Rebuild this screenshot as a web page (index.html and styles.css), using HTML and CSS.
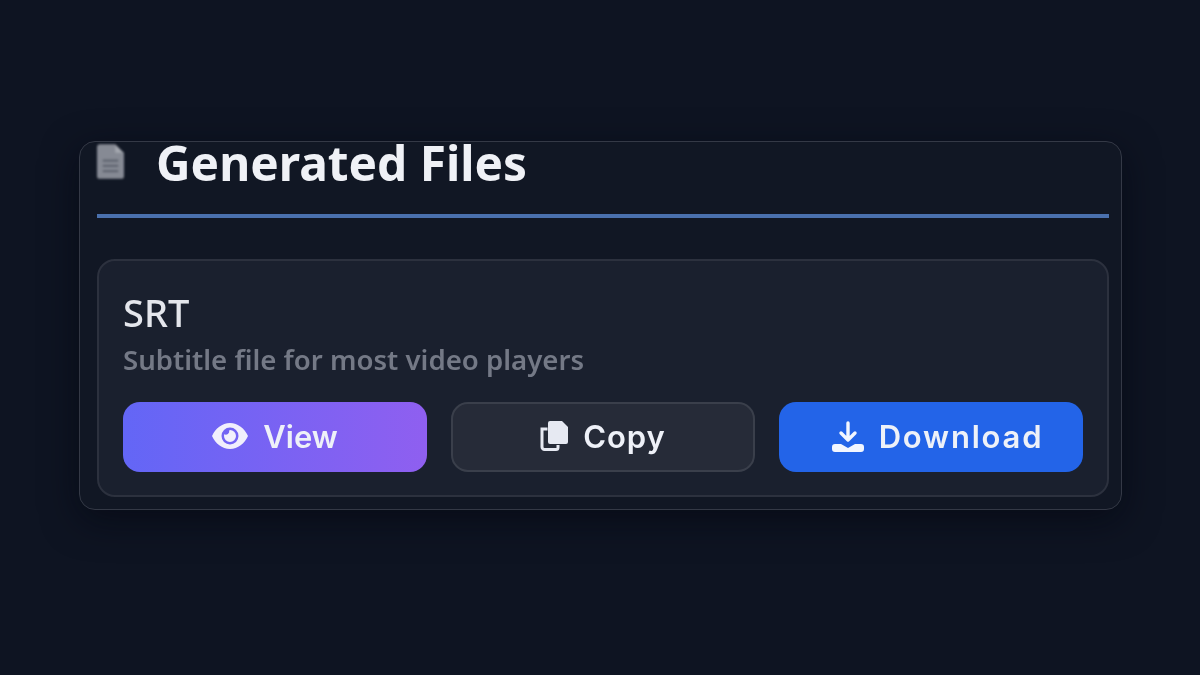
FILE: index.html
```html
<!DOCTYPE html>
<html lang="en">
<head>
<meta charset="utf-8">
<title>Generated Files</title>
<link rel="stylesheet" href="styles.css">
</head>
<body>
<section class="panel">
  <header class="panel-head">
    <svg class="doc-icon" viewBox="0 0 28 36" aria-hidden="true">
      <path fill="#868a94" d="M3 0h16l9 9v24a3 3 0 0 1-3 3H3a3 3 0 0 1-3-3V3a3 3 0 0 1 3-3z"/>
      <path fill="#a5a8b0" d="M19 1l8 8h-8z"/>
      <path stroke="#5f646f" stroke-width="2.400" d="M6 17h16M6 22.500h16M6 28h16"/>
    </svg>
    <h2 class="panel-title">Generated Files</h2>
  </header>
  <article class="file-card">
    <h3 class="file-name">SRT</h3>
    <p class="file-desc">Subtitle file for most video players</p>
    <div class="actions">
      <button class="btn btn-view">
        <svg class="icon icon-eye" viewBox="0 0 36 26" aria-hidden="true">
          <path fill="#f1effc" fill-rule="evenodd" d="M18 0C10 0 3.500 5.500 0 13c3.500 7.500 10 13 18 13s14.500-5.500 18-13C32.500 5.500 26 0 18 0zm0 4.500a8.500 8.500 0 1 1 0 17 8.500 8.500 0 0 1 0-17z"/>
          <path fill="#f1effc" fill-rule="evenodd" d="M18 7a6 6 0 1 1-6 6c0-.6.1-1.200.3-1.700a3.500 3.500 0 0 0 4.900-3.800c.3-.3.500-.5.800-.5z"/>
        </svg>
        <span>View</span>
      </button>
      <button class="btn btn-copy">
        <svg class="icon icon-copy" viewBox="0 0 28 30" aria-hidden="true">
          <path fill="none" stroke="#e6e9f2" stroke-width="3" d="M7.500 8H2v18a2.500 2.500 0 0 0 2.500 2.500H16a2 2 0 0 0 2-2V24"/>
          <path fill="#e6e9f2" d="M10 0h12l6 6v15a2 2 0 0 1-2 2H10a2 2 0 0 1-2-2V2a2 2 0 0 1 2-2z"/>
        </svg>
        <span>Copy</span>
      </button>
      <button class="btn btn-download">
        <svg class="icon icon-download" viewBox="0 0 32 31" aria-hidden="true">
          <path fill="none" stroke="#f2f6ff" stroke-width="3.400" stroke-linecap="round" stroke-linejoin="round" d="M16 2v16M9 12l7 7 7-7"/>
          <path fill="#f2f6ff" d="M3 23h6l7 4 7-4h6a3 3 0 0 1 3 3v2a3 3 0 0 1-3 3H3a3 3 0 0 1-3-3v-2a3 3 0 0 1 3-3z"/>
        </svg>
        <span>Download</span>
      </button>
    </div>
  </article>
</section>
</body>
</html>
```
FILE: styles.css
```css
* { box-sizing: border-box; }
html, body { margin: 0; height: 100%; }
body {
  background: #0e1422;
  padding: 141px 78px 0 79px;
  overflow: hidden;
  font-family: "Noto Sans", "Open Sans", sans-serif;
}
.panel {
  height: 369px;
  background: #111724;
  border: 1px solid #343946;
  border-radius: 16px;
  padding: 0 12px 12px 17px;
  box-shadow: 0 10px 36px rgba(3, 6, 14, 0.55);
}
.panel-head {
  height: 76px;
  display: flex;
  align-items: flex-start;
  gap: 32px;
  border-bottom: 4px solid #4a70ad;
}
.doc-icon {
  width: 27px;
  height: 35px;
  margin-top: 2px;
  flex: none;
  filter: blur(1px);
}
.panel-title {
  margin: 1px 0 0;
  font-size: 47.800px;
  line-height: 40px;
  font-weight: 700;
  color: #eff1f6;
  filter: blur(0.5px);
}
.file-card {
  margin-top: 41px;
  height: 238px;
  background: #1a202e;
  border: 2px solid #2c313e;
  border-radius: 18px;
  padding: 27px 24px 0;
}
.file-name {
  margin: 0;
  font-size: 38px;
  line-height: 48px;
  font-weight: 500;
  color: #e4e6ec;
  filter: blur(0.5px);
}
.file-desc {
  margin: 5px 0 0;
  font-size: 27.600px;
  line-height: 36px;
  font-weight: 600;
  color: #747986;
  filter: blur(0.5px);
}
.actions {
  margin-top: 25px;
  display: grid;
  grid-template-columns: repeat(3, 1fr);
  gap: 24px;
}
.btn {
  height: 70px;
  display: flex;
  align-items: center;
  justify-content: center;
  gap: 15px;
  border: 0;
  border-radius: 17px;
  padding: 0 0 2px;
  font-family: "Inter", "Noto Sans", sans-serif;
  font-size: 31px;
  font-weight: 600;
  color: #eef1f8;
}
.btn span, .btn .icon { filter: blur(0.5px); }
.btn-view { background: linear-gradient(90deg, #6366f6, #8f5ff0); }
.btn-copy { background: #262b38; border: 2px solid #3a3f4b; letter-spacing: 1px; }
.btn-download { background: #2364e8; letter-spacing: 1.800px; padding-left: 13px; }
.icon { flex: none; }
.icon-eye { width: 36px; height: 26px; }
.icon-copy { width: 28px; height: 30px; }
.icon-download { width: 32px; height: 31px; }
```
